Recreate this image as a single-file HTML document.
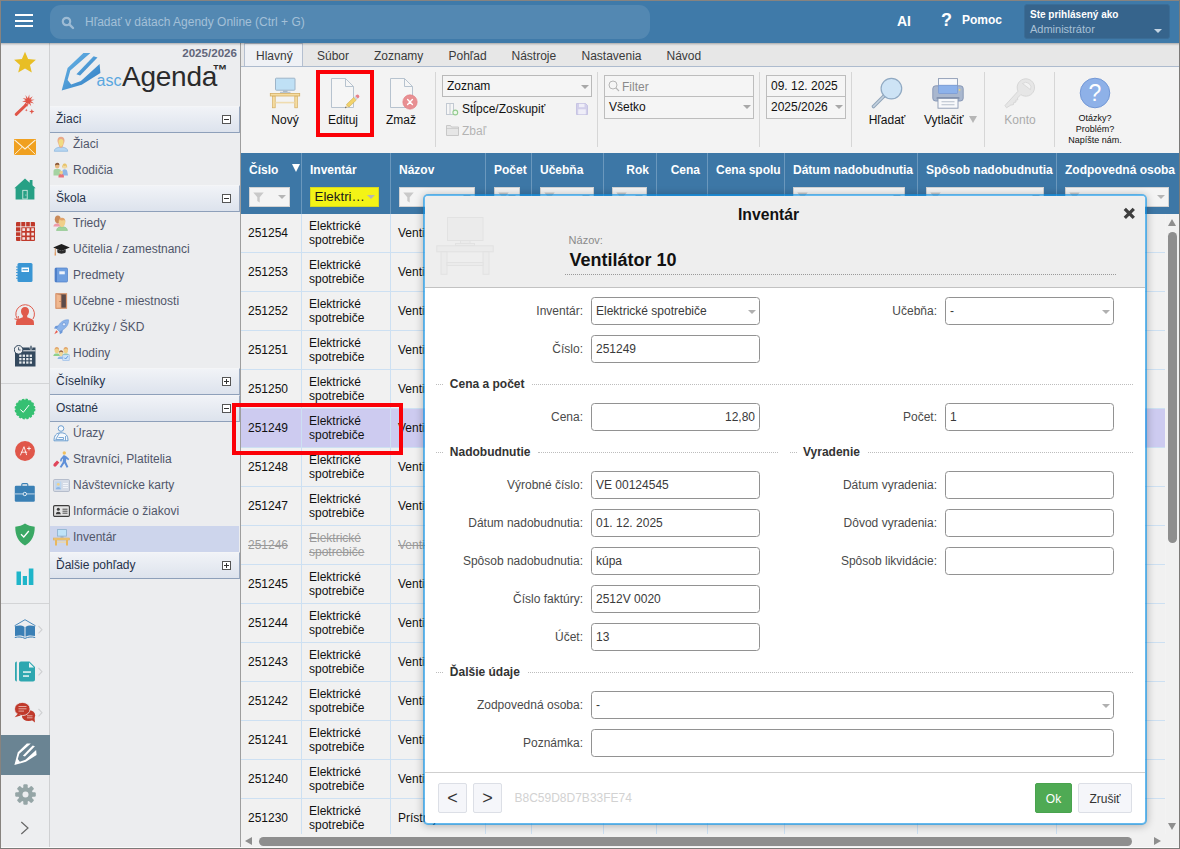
<!DOCTYPE html>
<html lang="sk">
<head>
<meta charset="utf-8">
<title>ascAgenda - Inventár</title>
<style>
*{box-sizing:border-box;margin:0;padding:0}
html,body{width:1180px;height:849px;overflow:hidden;background:#edeef0;font-family:"Liberation Sans",Arial,sans-serif;font-size:12px;color:#000}
.abs{position:absolute}
#app{position:absolute;left:0;top:0;width:1180px;height:849px;overflow:hidden}
#bl{position:absolute;left:0;top:0;width:1px;height:849px;background:#87837f;z-index:99}
#bt{position:absolute;left:0;top:0;width:1180px;height:1px;background:#87837f;z-index:99}
#br{position:absolute;left:1179px;top:0;width:1px;height:849px;background:#7c7a78;z-index:99}
#bb{position:absolute;left:0;top:848px;width:1180px;height:1px;background:#7c7a78;z-index:99}
/* top bar */
#topbar{position:absolute;left:0;top:0;width:1180px;height:43px;background:#3f7aa9;box-shadow:0 1px 2px rgba(0,0,0,.3);z-index:5}
#burger i{position:absolute;left:15px;width:18px;height:2px;background:#fff}
#search{position:absolute;left:50px;top:5px;width:600px;height:34px;border-radius:11px;background:#5388b2}
#search span{position:absolute;left:35px;top:10px;font-size:12px;line-height:14px;color:#a3c0d8;white-space:nowrap}
.tb{position:absolute;color:#fff;font-weight:bold;font-size:13px}
#user{position:absolute;left:1024px;top:4px;width:146px;height:35px;background:#36648c;border-radius:3px;border:1px solid #3a6d97}
/* icon bar */
#iconbar{position:absolute;left:0;top:42px;width:50px;height:807px;background:#edeef0;border-right:1px solid #cfd0d2}
/* sidebar */
#side{position:absolute;left:50px;top:42px;width:190px;height:807px;background:#ecedef}
.sh{position:absolute;left:0;width:190px;height:27px;background:linear-gradient(#f1f3f7,#dde3ed);border-bottom:1px solid #8ea0ba;border-right:1px solid #9aa9bf;border-top:1px solid #f4f5f7;font-size:12px;color:#26324a;padding:5px 0 0 6px}
.sh b{position:absolute;left:172px;top:8px;width:9px;height:9px;border:1px solid #555;background:#fff}
.sh b:before{content:"";position:absolute;left:1px;top:3px;width:5px;height:1px;background:#333}
.sh b.p:after{content:"";position:absolute;left:3px;top:1px;width:1px;height:5px;background:#333}
.si{position:absolute;left:0;width:189px;height:26px;font-size:12px;color:#50566a;padding:5px 0 0 23px;white-space:nowrap}
.si .ic{position:absolute;left:3px;top:4px;line-height:0}
/* main */
#main{position:absolute;left:0;top:0;width:1180px;height:849px}
#tabs{position:absolute;left:241px;top:43px;width:939px;height:24px;background:#e7e7e7;border-bottom:1px solid #adbbce}
.tt{position:absolute;top:49px;font-size:12px;line-height:14px;color:#3a3a3a;white-space:nowrap}
#tab1{position:absolute;left:244px;top:43px;width:59px;height:23px;background:#eff1f5;border:1px solid #b4bfd0;border-bottom:none}
.rl{position:absolute;font-size:12px;line-height:14px;color:#111;text-align:center;white-space:nowrap}
.vsep{position:absolute;top:72px;width:1px;height:75px;background:#d6d6d6}
.inp{position:absolute;background:#fff;border:1px solid #c6c6c6;font-size:12px;line-height:14px;padding:3px 0 0 4px;height:20px;color:#111;white-space:nowrap}
.dd{position:absolute;width:0;height:0;border-left:4px solid transparent;border-right:4px solid transparent;border-top:4px solid #a8a8a8}
/* grid */
#ghead{position:absolute;left:241px;top:153px;width:939px;height:61px;background:#3d77a6}
.hc{position:absolute;top:153px;height:61px;border-right:1px solid #6b98bd;color:#fff;font-weight:bold;font-size:12px;line-height:14px;padding:10px 0 0 8px;white-space:nowrap;overflow:hidden}
.fb{position:absolute;top:187px;height:20px;background:#f4f4f4;border:1px solid #d2d2d2}
#gbody{position:absolute;left:241px;top:214px;width:924px;height:620px;background:#f1f1f1;overflow:hidden}
.row{position:absolute;left:0;width:924px;height:39px;border-bottom:1px solid #cde0f2;font-size:12px;color:#111}
.row span{position:absolute;line-height:14px;white-space:nowrap}
.row .c1{left:7px;top:12px}
.row .c2{left:68px;top:5px}
.row .c3{left:157px;top:12px}
.row.del{color:#9a9a9a}
.row.del span{text-decoration:line-through}
.row.sel{background:#cdcbf0}
.gv{position:absolute;top:0;width:1px;height:620px;background:#cde0f2}
.red{position:absolute;border:4px solid #fb0007}
/* modal */
#modal{position:absolute;left:423px;top:194px;width:724px;height:631px;background:#fff;background-clip:padding-box;border:2px solid rgba(15,150,235,.62);border-radius:5px;box-shadow:0 1px 9px rgba(0,0,0,.27);overflow:hidden;z-index:4}
#mhead{position:absolute;left:0;top:0;width:720px;height:92px;background:#eeeeee;border-bottom:1px solid #c2c2c2}
.ml{position:absolute;font-size:12px;line-height:14px;color:#4a4a4a;text-align:right;white-space:nowrap}
.mi{position:absolute;height:28px;background:#fff;border:1px solid #929292;border-radius:3.500px;font-size:12px;line-height:14px;color:#3a3a3a;padding:6px 0 0 4px;white-space:nowrap}
.sec{position:absolute;font-size:12px;line-height:14px;font-weight:bold;color:#333;white-space:nowrap}
.dot{position:absolute;height:0;border-top:1px dotted #bdbdbd}
.btn{position:absolute;background:#f5f6fa;border:1px solid #dcdfe6;border-radius:2px;text-align:center;color:#333;line-height:14px}
</style>
</head>
<body>
<div id="app">
<div id="bl"></div><div id="bt"></div><div id="br"></div><div id="bb"></div>

<!-- TOPBAR -->
<div id="topbar">
  <div id="burger"><i style="top:14px"></i><i style="top:19.5px"></i><i style="top:25px"></i></div>
  <div id="search">
    <svg class="abs" style="left:11px;top:10.500px" width="14" height="14" viewBox="0 0 14 14"><circle cx="5.500" cy="5.500" r="3.700" fill="none" stroke="#9dbbd4" stroke-width="2.200"/><path d="M8.300 8.300L12 12" stroke="#9dbbd4" stroke-width="2.400" stroke-linecap="round"/></svg>
    <span>Hľadať v dátach Agendy Online (Ctrl + G)</span>
  </div>
  <div class="tb" style="left:897px;top:13px;font-size:14px;line-height:16px">AI</div>
  <div class="tb" style="left:941px;top:10px;font-size:18px;line-height:21px">?</div>
  <div class="tb" style="left:962px;top:13px;font-size:12px;line-height:14px">Pomoc</div>
  <div id="user">
    <div class="abs" style="left:5px;top:4px;font-size:10px;line-height:12px;font-weight:bold;color:#fff;white-space:nowrap">Ste prihlásený ako</div>
    <div class="abs" style="left:5px;top:18px;font-size:11px;line-height:13px;color:#a9c1d6;white-space:nowrap">Administrátor</div>
    <div class="dd" style="left:129px;top:24px;border-top-color:#c5d5e3"></div>
  </div>
</div>

<!-- ICONBAR -->
<div id="iconbar">
<!-- star -->
<svg class="abs" style="left:13px;top:9px" width="24" height="23" viewBox="0 0 24 23"><path d="M12 0.8l3.1 7.2 7.8.7-5.9 5.2 1.8 7.7-6.8-4.1-6.8 4.1 1.8-7.7-5.9-5.2 7.8-.7z" fill="#e8be25"/></svg>
<!-- wand -->
<svg class="abs" style="left:14px;top:52px" width="22" height="23" viewBox="0 0 22 23"><path d="M2.200 20.300L12 11" stroke="#e05548" stroke-width="3" stroke-linecap="round"/><path d="M15.24 0.47 L15.46 4.38 L18.72 2.21 L16.61 5.50 L20.52 5.67 L16.87 7.09 L19.93 9.52 L16.15 8.53 L17.20 12.29 L14.72 9.27 L13.36 12.93 L13.14 9.02 L9.88 11.19 L11.99 7.90 L8.08 7.73 L11.73 6.31 L8.67 3.88 L12.45 4.87 L11.40 1.11 L13.88 4.13Z" fill="#e05548"/><path d="M17.80 15.00L18.53 16.87L20.40 17.60L18.53 18.33L17.80 20.20L17.07 18.33L15.20 17.60L17.07 16.87ZM12.30 14.80L12.69 15.81L13.70 16.20L12.69 16.59L12.30 17.60L11.91 16.59L10.90 16.20L11.91 15.81Z" fill="#e05548"/></svg>
<!-- envelope -->
<svg class="abs" style="left:14px;top:97px" width="22" height="16" viewBox="0 0 22 16"><rect width="22" height="16" fill="#f0a020"/><path d="M0.500 0.800l10.500 9.200L21.500 0.800" fill="none" stroke="#fdf3de" stroke-width="1.100"/><path d="M0.500 15.500l7.600-7.300M21.500 15.500l-7.600-7.300" fill="none" stroke="#fdf3de" stroke-width="0.900"/></svg>
<!-- house -->
<svg class="abs" style="left:14px;top:136px" width="22" height="22" viewBox="0 0 22 22"><path d="M11 0.500L0.300 10.200h1.300V21.500h18.800V10.200h1.300L18.500 7.300V2h-2.800v2.800z" fill="#27a085"/><rect x="8.800" y="12.300" width="4.400" height="8.700" fill="#27a085" stroke="#dff0ea" stroke-width="0.800"/><circle cx="11.900" cy="17" r="0.500" fill="#dff0ea"/></svg>
<!-- grid -->
<svg class="abs" style="left:16px;top:180px" width="19" height="19" viewBox="0 0 19 19"><rect x="0" y="0" width="19" height="19" rx="1" fill="#c0392b"/><g fill="#f3e3e1"><rect x="6.300" y="6.200" width="2.800" height="2.800"/><rect x="10.800" y="6.200" width="2.800" height="2.800"/><rect x="15.300" y="6.200" width="2.600" height="2.800"/><rect x="6.300" y="10.700" width="2.800" height="2.800"/><rect x="10.800" y="10.700" width="2.800" height="2.800"/><rect x="15.300" y="10.700" width="2.600" height="2.800"/><rect x="6.300" y="15.200" width="2.800" height="2.600"/><rect x="10.800" y="15.200" width="2.800" height="2.600"/><rect x="15.300" y="15.200" width="2.600" height="2.600"/></g><g stroke="#edeef0" stroke-width="0.900"><path d="M4.800 0v19M9.700 0v5M14.300 0v5M0 4.800h19M0 9.800h5M0 14.400h5"/></g></svg>
<!-- notebook -->
<svg class="abs" style="left:16px;top:221px" width="17" height="19" viewBox="0 0 17 19"><rect x="1.500" y="0" width="15" height="19" rx="1.500" fill="#3a96d4"/><rect x="5.500" y="4.500" width="7.500" height="4.500" fill="#fff"/><rect x="6.500" y="6.200" width="5.500" height="1.100" fill="#3a96d4"/><g stroke="#3a96d4" stroke-width="1"><path d="M0 4h2M0 6.800h2M0 9.600h2M0 12.400h2M0 15.200h2"/></g></svg>
<!-- person refresh -->
<svg class="abs" style="left:14px;top:261px" width="22" height="23" viewBox="0 0 22 23"><path d="M3 15.500A9.300 9.300 0 1 1 19 16" fill="none" stroke="#e05a4b" stroke-width="1"/><path d="M0.500 15.800l3.600 1 .2-3.800" fill="none" stroke="#e05a4b" stroke-width="1"/><path d="M11 4c2.600 0 4 1.900 4 4.300 0 1.900-.8 3.500-1.800 4.300v1.600c2.600.9 5.500 1.700 6.300 3.300.4.900.5 2 .5 4.500H2c0-2.500.1-3.600.5-4.500.8-1.600 3.700-2.400 6.300-3.300v-1.600C7.800 11.800 7 10.200 7 8.300 7 5.900 8.400 4 11 4z" fill="#e05a4b"/></svg>
<!-- calendar clock -->
<svg class="abs" style="left:14px;top:303px" width="22" height="22" viewBox="0 0 22 22"><rect x="1" y="2.500" width="20.500" height="19" fill="#34495e"/><rect x="9" y="5.300" width="12.500" height="1" fill="#edeef0"/><rect x="16" y="0.500" width="2" height="4" rx="1" fill="#34495e" stroke="#edeef0" stroke-width="0.600"/><g fill="#e6e9ec"><rect x="5.200" y="9.600" width="2.300" height="2.300"/><rect x="8.700" y="9.600" width="2.300" height="2.300"/><rect x="12.200" y="9.600" width="2.300" height="2.300"/><rect x="15.700" y="9.600" width="2.300" height="2.300"/><rect x="5.200" y="13" width="2.300" height="2.300"/><rect x="8.700" y="13" width="2.300" height="2.300"/><rect x="12.200" y="13" width="2.300" height="2.300"/><rect x="15.700" y="13" width="2.300" height="2.300"/><rect x="5.200" y="16.400" width="2.300" height="2.300"/><rect x="8.700" y="16.400" width="2.300" height="2.300"/><rect x="12.200" y="16.400" width="2.300" height="2.300"/><rect x="15.700" y="16.400" width="2.300" height="2.300"/></g><circle cx="4.600" cy="4.800" r="4.300" fill="#edeef0" stroke="#34495e" stroke-width="1"/><path d="M4.600 2.300v2.700h2" fill="none" stroke="#34495e" stroke-width="0.900"/></svg>
<div class="abs" style="left:1px;top:341px;width:48px;height:1px;background:#d3d4d6"></div>
<!-- check badge -->
<svg class="abs" style="left:14px;top:356px" width="22" height="22" viewBox="0 0 22 22"><circle cx="11" cy="11" r="9.600" fill="#36c072" stroke="#36c072" stroke-width="1.600" stroke-dasharray="2.300 1.500"/><path d="M6.300 11.500l3 2.800 5.800-7.300" fill="none" stroke="#fff" stroke-width="1"/></svg>
<!-- A+ -->
<svg class="abs" style="left:14px;top:398px" width="22" height="22" viewBox="0 0 22 22"><circle cx="11" cy="11" r="10" fill="#e0574a"/><path d="M6.500 15l3.500-8.300 2.500 8M7.300 12.200h5.500M13.500 8.500h3M15 7v3" fill="none" stroke="#fff" stroke-width="0.850" stroke-linecap="round"/></svg>
<!-- briefcase -->
<svg class="abs" style="left:14px;top:441px" width="22" height="20" viewBox="0 0 22 20"><rect x="7.800" y="0.600" width="6" height="3.500" rx="1" fill="none" stroke="#3a80b5" stroke-width="1.100"/><rect x="0.800" y="2.800" width="20" height="16" rx="1.200" fill="#3a80b5"/><rect x="0.800" y="10.300" width="20" height="1.200" fill="#a9c6de"/><circle cx="10.800" cy="11" r="1.700" fill="#3a80b5" stroke="#dfeaf3" stroke-width="1"/></svg>
<!-- shield -->
<svg class="abs" style="left:14px;top:481px" width="22" height="23" viewBox="0 0 22 23"><path d="M11 0.600c2.800 2 6 3 9.700 3.100.2 8.800-3 15-9.700 18.700C4.300 18.700 1.100 12.500 1.300 3.700 5 3.600 8.200 2.600 11 0.600z" fill="#3aa864"/><path d="M7 11.300l2.800 2.700 5-6" fill="none" stroke="#fff" stroke-width="1.300"/></svg>
<!-- chart -->
<svg class="abs" style="left:16px;top:526px" width="18" height="18" viewBox="0 0 18 18"><rect x="0.500" y="3.500" width="4.500" height="13.500" fill="#1fb5c9"/><rect x="6.800" y="8" width="4.200" height="9" fill="#1fb5c9"/><rect x="12.800" y="0.500" width="4.600" height="16.500" fill="#1fb5c9"/></svg>
<div class="abs" style="left:1px;top:561px;width:48px;height:1px;background:#d3d4d6"></div>
<!-- book -->
<svg class="abs" style="left:14px;top:577px" width="30" height="21" viewBox="0 0 30 21"><path d="M0.600 6.800L11 0.700l10.500 6.100" fill="none" stroke="#3a7fb5" stroke-width="0.900"/><path d="M1 7.200c3.500-1.200 7-1 9.500.7v9.800c-2.500-1.500-6-1.700-9.500-.6zM21 7.200c-3.500-1.200-7-1-9.500.7v9.800c2.500-1.500 6-1.700 9.500-.6z" fill="#3a7fb5"/><path d="M0.800 18.500c3.500-.9 7-.7 10.200.9 3.200-1.600 6.700-1.800 10.200-.9" fill="none" stroke="#3a7fb5" stroke-width="1"/><path d="M24.500 7l3.500 3.700-3.500 3.700" fill="none" stroke="#cfd0d2" stroke-width="1.100"/></svg>
<!-- doc -->
<svg class="abs" style="left:14px;top:619px" width="30" height="21" viewBox="0 0 30 21"><path d="M1 2.500c0-1 .5-1.800 1.800-2v20C1.500 20.300 1 19.500 1 18.500z" fill="#2ea7b0"/><path d="M7 0.500h8.500l5.500 5.500v12.500c0 1.200-.8 2-2 2H7c-1.200 0-2-.8-2-2v-16c0-1.200.8-2 2-2z" fill="#2ea7b0"/><path d="M15 1.500v5h5z" fill="#eaf5f6"/><rect x="9" y="10.300" width="8" height="1.500" fill="#eaf5f6"/><rect x="9" y="14.300" width="6" height="1.500" fill="#eaf5f6"/><path d="M24.500 7l3.500 3.700-3.500 3.700" fill="none" stroke="#cfd0d2" stroke-width="1.100"/></svg>
<!-- chat -->
<svg class="abs" style="left:14px;top:660px" width="30" height="21" viewBox="0 0 30 21"><ellipse cx="14.500" cy="13.500" rx="6.700" ry="5.500" fill="#c0392b"/><path d="M17 17.500l4 3-0.500-4.500z" fill="#c0392b"/><ellipse cx="8.300" cy="7" rx="7.800" ry="6.600" fill="#c0392b" stroke="#edeef0" stroke-width="0.800"/><path d="M4 11.500l-3.300 3.800 6-1.800z" fill="#c0392b"/><g stroke="#e9b5af" stroke-width="0.900"><path d="M4.500 4.500h8M4.500 6.800h8M4.500 9.100h5.500M13 13.800h5.500M13 15.800h5.500"/></g><path d="M24.500 7l3.500 3.700-3.500 3.700" fill="none" stroke="#cfd0d2" stroke-width="1.100"/></svg>
<!-- active pencil -->
<div class="abs" style="left:1px;top:693px;width:49px;height:40px;background:#6a8493"></div>
<svg class="abs" style="left:13.500px;top:701px" width="23.500" height="23" viewBox="0 0 41 40"><path d="M22.400 1H29.400L9.300 18.500 6.600 28 10.200 32.600 19.900 29 38.600 12 39.400 21 20.700 32.800 0.700 38.500 6.600 16Z" fill="#fff"/><path d="M32.600 4.300L36.500 5.500 19.100 23.400 15.400 22.200Z" fill="#fff"/></svg>
<!-- gear -->
<svg class="abs" style="left:15px;top:742px" width="21" height="21" viewBox="0 0 21 21"><g transform="translate(10.500 10.500)"><g fill="#95a5a6"><rect x="-2.200" y="-10.300" width="4.400" height="20.600" rx="1.200"/><rect x="-2.200" y="-10.300" width="4.400" height="20.600" rx="1.200" transform="rotate(45)"/><rect x="-2.200" y="-10.300" width="4.400" height="20.600" rx="1.200" transform="rotate(90)"/><rect x="-2.200" y="-10.300" width="4.400" height="20.600" rx="1.200" transform="rotate(135)"/><circle r="7.300"/></g><circle r="3" fill="#edeef0"/></g></svg>
<!-- chevron -->
<svg class="abs" style="left:20px;top:779px" width="10" height="14" viewBox="0 0 10 14"><path d="M1.300 1l6.700 6-6.700 6" fill="none" stroke="#666" stroke-width="1.200"/></svg>

</div>

<!-- SIDEBAR -->
<div id="side">
<!--SIDE-->
<div class="abs" style="right:3px;top:5px;font-size:11.6px;line-height:1;font-weight:bold;color:#62667a">2025/2026</div>
<svg class="abs" style="left:11px;top:10px" width="41" height="40" viewBox="0 0 41 40"><defs><linearGradient id="lg" x1="0" y1="0" x2="1" y2="1"><stop offset="0" stop-color="#6bb7e8"/><stop offset="1" stop-color="#2f7cc2"/></linearGradient></defs><path d="M22.400 1H29.400L9.300 18.500 6.600 28 10.200 32.600 19.900 29 38.600 12 39.400 21 20.700 32.800 0.700 38.500 6.600 16Z" fill="url(#lg)"/><path d="M32.600 4.300L36.500 5.500 19.100 23.400 15.400 22.200Z" fill="url(#lg)"/></svg>
<div class="abs" style="left:46.500px;top:30.800px;font-size:16px;line-height:1;color:#5aa7df">asc</div>
<div class="abs" style="left:72px;top:20.600px;font-size:28px;line-height:1;color:#2b2b2b;letter-spacing:-0.250px">Agenda</div>
<div class="abs" style="left:162.500px;top:20px;font-size:15px;line-height:1;font-weight:bold;color:#2b2b2b">™</div>
<div class="sh" style="top:64px">Žiaci<b></b></div>
<div class="si" style="top:90px"><span class="ic" style="top:4px"><svg width="16" height="16" viewBox="0 0 16 16"><path d="M1.300 15.300c0-2.600 2-3.500 4.700-4h4c2.700.5 4.700 1.400 4.700 4z" fill="#b5d6f2" stroke="#8ab6de" stroke-width="0.700"/><path d="M8 0.800c2.300 0 3.500 1.600 3.500 4 0 1-.3 1.900-.8 2.600L9.800 10.500c-.4.900-1 1.300-1.800 1.300s-1.400-.4-1.800-1.300L5.300 7.400c-.5-.7-.8-1.600-.8-2.600 0-2.400 1.200-4 3.500-4z" fill="#e9a98a"/><path d="M8 3c1.500 0 2.500.9 2.500 2.700 0 1.300-.4 2.500-.9 3.600-.4.900-.9 1.400-1.600 1.400s-1.200-.5-1.600-1.400c-.5-1.100-.9-2.300-.9-3.600C5.500 3.900 6.500 3 8 3z" fill="#f0dc82"/></svg></span>Žiaci</div>
<div class="si" style="top:116px"><span class="ic" style="top:4px"><svg width="17" height="16" viewBox="0 0 17 16"><path d="M0.500 13.500V9c0-1.200 1-2 2.200-2h3c1.200 0 2.200.8 2.200 2v4.500z" fill="#a5d3a2"/><ellipse cx="4.200" cy="3.800" rx="2.200" ry="2.700" fill="#e6b77e"/><path d="M2 3.500C2 1.500 3 .7 4.300.7S6.500 1.500 6.400 3.200C5.500 2.600 3.500 2.300 2 3.500z" fill="#8b5a3c"/><path d="M9 13.500l.3-4c.2-1.500 1-2.300 2.300-2.300s2.500.8 2.700 2.300l.7 4z" fill="#8fb6e6"/><ellipse cx="11.700" cy="4.200" rx="2" ry="2.500" fill="#f0d9a0"/><path d="M9.300 6.500c-.3-3 .5-5 2.400-5s2.800 2 2.400 5c-.5-.8-.8-2-1-3-.8.500-2 .5-2.800 0-.2 1-.5 2.200-1 3z" fill="#e8c36a"/><path d="M5.500 15.500v-1.700c0-.9.800-1.500 1.700-1.500h2c.9 0 1.700.6 1.700 1.500v1.700z" fill="#e8727a"/><circle cx="8.200" cy="10.500" r="1.700" fill="#f0d08a"/></svg></span>Rodičia</div>
<div class="sh" style="top:143px">Škola<b></b></div>
<div class="si" style="top:169px"><span class="ic" style="top:4px"><svg width="17" height="16" viewBox="0 0 17 16"><path d="M0.300 11.500c.3-2 1.800-2.700 3.500-3h2c1.700.3 3.200 1 3.500 3z" fill="#ef9aa8"/><path d="M4.800 0.500c1.800 0 3 1.500 3 3.800S6.500 8.500 4.800 8.500 1.800 6.600 1.800 4.300 3 .5 4.800 .5z" fill="#c98a5a"/><path d="M3.500 15.500c.3-2.500 2-3.300 4-3.700h3c2 .4 3.700 1.200 4 3.700z" fill="#9fd39c" stroke="#7cbf7a" stroke-width="0.500"/><path d="M9 3c2 0 3.300 1.600 3.300 4S10.800 12 9 12 5.700 9.400 5.700 7 7 3 9 3z" fill="#f0d08a"/><path d="M5.600 7C5.500 4.300 7 2.800 9 2.800s3.500 1.500 3.400 4.200c-.4-1.200-.8-1.800-1.200-2-1.300.5-3.100.5-4.400 0-.4.200-.8.800-1.200 2z" fill="#e2a46a"/></svg></span>Triedy</div>
<div class="si" style="top:195px"><span class="ic" style="top:4px"><svg width="17" height="16" viewBox="0 0 17 16"><path d="M8.500 3L16.800 6.500 8.500 10 .2 6.500z" fill="#1e1e1e"/><path d="M4.300 8.300v3c1 1 2.500 1.400 4.200 1.400s3.200-.4 4.200-1.400v-3L8.500 10z" fill="#2b2b2b"/><path d="M2.300 7.300v5" stroke="#c9824a" stroke-width="0.800"/><path d="M1.800 11.500h1l.3 3h-1.600z" fill="#e0965a"/></svg></span>Učitelia / zamestnanci</div>
<div class="si" style="top:221px"><span class="ic" style="top:4px"><svg width="16" height="16" viewBox="0 0 16 16"><rect x="2" y="1" width="12.500" height="14" rx="1" fill="#6f9fe0" stroke="#4f7fc8" stroke-width="0.700"/><rect x="2" y="1" width="2" height="14" fill="#4f7fc8"/><rect x="6.300" y="4.300" width="5.500" height="3" fill="#eef3fb"/></svg></span>Predmety</div>
<div class="si" style="top:247px"><span class="ic" style="top:4px"><svg width="16" height="16" viewBox="0 0 16 16"><rect x="3" y="0.800" width="10.500" height="14.400" fill="#5b4a4a" stroke="#d8936a" stroke-width="1.200"/><path d="M3 0.800l5 1.200v13l-5 .2z" fill="#f0b890" stroke="#d8936a" stroke-width="0.800"/><circle cx="7" cy="8.500" r="0.600" fill="#a0643c"/></svg></span>Učebne - miestnosti</div>
<div class="si" style="top:273px"><span class="ic" style="top:4px"><svg width="17" height="16" viewBox="0 0 17 16"><path d="M15.500 0.800c-4-.3-7.500 1.500-10 5.700l-2 3 3.300 3.300 3-2c4.200-2.500 6-6 5.700-10z" fill="#8db4ea" stroke="#6c98d8" stroke-width="0.600"/><circle cx="11" cy="5.300" r="1.600" fill="#dfeafa" stroke="#5f8ccf" stroke-width="0.600"/><path d="M5.500 6.500L2.500 7 1 9.500l2.700.2zM9.800 10.800l-.5 3-2.500 1.500-.2-2.700z" fill="#6c98d8"/><path d="M3.300 11.300l1.700 1.700-3.700 2.200z" fill="#e85a4a"/></svg></span>Krúžky / ŠKD</div>
<div class="si" style="top:299px"><span class="ic" style="top:4px"><svg width="17" height="16" viewBox="0 0 17 16"><path d="M0.300 11c.2-1.700 1.200-2.300 2.500-2.500h2c1.300.2 2.300.8 2.500 2.500z" fill="#8fd08c"/><ellipse cx="3.800" cy="5.500" rx="2.200" ry="2.800" fill="#f0d08a"/><path d="M1.500 5c0-2 1-3 2.300-3S6.200 3 6.100 5C5.500 4 4.800 3.700 3.800 3.700S2.100 4 1.500 5z" fill="#e2a46a"/><path d="M9.300 11c.2-1.700 1.200-2.300 2.500-2.500h2c1.300.2 2.300.8 2.500 2.500z" fill="#8fd08c"/><ellipse cx="12.800" cy="5.500" rx="2.200" ry="2.800" fill="#f0d08a"/><path d="M10.500 5c0-2 1-3 2.300-3s2.400 1 2.300 3c-.6-1-1.300-1.300-2.300-1.300S11.100 4 10.500 5z" fill="#e2a46a"/><path d="M4.500 14c.2-1.700 1.300-2.400 2.600-2.600h2c1.300.2 2.400.9 2.600 2.600z" fill="#8fb6e6"/><ellipse cx="8.100" cy="8.600" rx="2.100" ry="2.600" fill="#f2d898"/><path d="M5.900 8c0-1.800.9-2.700 2.200-2.700s2.300.9 2.200 2.700c-.6-.9-1.200-1.100-2.200-1.100S6.500 7.100 5.900 8z" fill="#9a6a4a"/><rect x="9.800" y="9.800" width="6.400" height="5.700" fill="#cfe3f8" stroke="#8fb6e6" stroke-width="0.600"/><path d="M11.300 12.700l1.300 1.300 2.300-2.800" fill="none" stroke="#4f8fd8" stroke-width="0.900"/></svg></span>Hodiny</div>
<div class="sh" style="top:326px">Číselníky<b class="p"></b></div>
<div class="sh" style="top:353px">Ostatné<b></b></div>
<div class="si" style="top:379px"><span class="ic" style="top:4px"><svg width="16" height="17" viewBox="0 0 16 17"><circle cx="8" cy="3.500" r="2.800" fill="#f4f8fc" stroke="#5f95cc" stroke-width="0.900"/><path d="M1 15.800c0-5 2-8 7-8s7 3 7 8z" fill="#f4f8fc" stroke="#5f95cc" stroke-width="0.900"/><path d="M6.500 8l-3.800 6.500h7.800v-2H5.500" fill="none" stroke="#5f95cc" stroke-width="0.800"/><path d="M12.500 11v4.500" stroke="#5f95cc" stroke-width="0.800"/></svg></span>Úrazy</div>
<div class="si" style="top:405px"><span class="ic" style="top:4px"><svg width="17" height="17" viewBox="0 0 17 17"><circle cx="11.300" cy="2" r="1.700" fill="#f0c060"/><path d="M10.800 4l-3.300 3.800-.5 2.500 1.500.3.500-2 1-1-.3 3.500-3 4.800 1.700.8 3-4.500 2.200 4.500 1.800-.7-2.400-5.300.3-3 2 1.500 1-1.200-3.300-3z" fill="#5f8fd8"/><path d="M1 12.500l3-3 2.300 2-3 3.500c-.7.800-1.700.8-2.400.2s-.7-1.900.1-2.700z" fill="#e0455a"/></svg></span>Stravníci, Platitelia</div>
<div class="si" style="top:431px"><span class="ic" style="top:6px"><svg width="17" height="13" viewBox="0 0 17 13"><rect x="0.500" y="0.500" width="16" height="12" rx="1.200" fill="#d5dbe6" stroke="#aab3c4" stroke-width="0.800"/><rect x="2.300" y="2.500" width="6" height="8" fill="#bcd6f0"/><circle cx="5.300" cy="5.300" r="1.400" fill="#f0d08a"/><path d="M2.800 10.300c.2-1.600 1.200-2.300 2.500-2.300s2.300.7 2.500 2.300z" fill="#8fb6e6"/><path d="M10 4.500h5M10 6.500h5M10 8.500h5" stroke="#f4f6fa" stroke-width="0.900"/></svg></span>Návštevnícke karty</div>
<div class="si" style="top:457px"><span class="ic" style="top:6px"><svg width="17" height="12" viewBox="0 0 17 12"><rect x="0.600" y="0.600" width="15.800" height="10.800" rx="1.200" fill="#e4e4e4" stroke="#3c3c3c" stroke-width="1.100"/><circle cx="5.300" cy="4.300" r="1.500" fill="#3c3c3c"/><path d="M2.800 9.300c.2-1.700 1.200-2.500 2.500-2.500s2.300.8 2.500 2.500z" fill="#3c3c3c"/><path d="M9.500 4.200h5M9.500 6.200h5M9.500 8.200h5" stroke="#3c3c3c" stroke-width="0.900"/></svg></span>Informácie o žiakovi</div>
<div class="si" style="top:484px;padding-top:4px;background:#cdd5ec"><span class="ic" style="top:3px"><svg width="17" height="17" viewBox="0 0 17 17"><rect x="4.500" y="0.600" width="9" height="6.500" fill="#bfe3f8" stroke="#8ab0cc" stroke-width="0.800"/><rect x="7.500" y="7.300" width="3" height="1.300" fill="#9ab0c0"/><rect x="0.500" y="9" width="16" height="2" fill="#f0c878" stroke="#d8a850" stroke-width="0.500"/><rect x="2" y="11" width="2" height="5.500" fill="#e8b860"/><rect x="13" y="11" width="2" height="5.500" fill="#e8b860"/><rect x="4" y="12.500" width="9" height="1.200" fill="#f0d8a0"/></svg></span>Inventár</div>
<div class="sh" style="top:510px">Ďalšie pohľady<b class="p"></b></div>
<!--/SIDE-->
</div>

<!-- MAIN -->
<div id="main">
<!--MAIN-->
<div class="abs" style="left:240px;top:43px;width:940px;height:806px;background:#f3f3f3"></div>
<div class="abs" style="left:240px;top:43px;width:1px;height:806px;background:#9e9e9e"></div>
<div id="tabs"></div>
<div id="tab1"></div>
<span class="tt" style="left:256px">Hlavný</span>
<span class="tt" style="left:317px">Súbor</span>
<span class="tt" style="left:374px">Zoznamy</span>
<span class="tt" style="left:448.5px">Pohľad</span>
<span class="tt" style="left:511.5px">Nástroje</span>
<span class="tt" style="left:581.5px">Nastavenia</span>
<span class="tt" style="left:666.5px">Návod</span>
<div class="vsep" style="left:435px"></div>
<div class="vsep" style="left:597px"></div>
<div class="vsep" style="left:759px"></div>
<div class="vsep" style="left:851px"></div>
<div class="vsep" style="left:984px"></div>
<div class="vsep" style="left:1054px"></div>
<svg class="abs" style="left:269px;top:77px" width="32" height="32" viewBox="0 0 32 32"><rect x="6.500" y="1.200" width="19.500" height="12" rx="0.800" fill="#bfe0f5" stroke="#9db4c8" stroke-width="1"/><rect x="14" y="13.500" width="4.500" height="1.500" fill="#a8b8c8"/><rect x="11" y="14.800" width="10.500" height="1.200" fill="#b8c4d0"/><rect x="1.300" y="16.500" width="29.400" height="2.500" fill="#f5dca0" stroke="#d4ad62" stroke-width="0.800"/><rect x="3.600" y="19.200" width="2.600" height="11.600" fill="#f5dca0" stroke="#d4ad62" stroke-width="0.700"/><rect x="25.800" y="19.200" width="2.600" height="11.600" fill="#f5dca0" stroke="#d4ad62" stroke-width="0.700"/><rect x="6.500" y="24.800" width="19" height="1.600" fill="#efdcb0"/></svg>
<div class="rl" style="left:255px;top:113px;width:60px">Nový</div>
<svg class="abs" style="left:331px;top:78px" width="30" height="32" viewBox="0 0 30 32"><path d="M0.500 0.500H14.500L22.500 8.500V29.500H0.500Z" fill="#f6f6f6" stroke="#b7c3cf" stroke-width="1"/><path d="M14.500 0.500V8.500H22.500" fill="none" stroke="#b7c3cf" stroke-width="1"/><g transform="translate(14 30.300) rotate(-43.500)"><path d="M0 0L3.800 -1.800V1.800Z" fill="#f0d9a8"/><path d="M0 0L1.600 -0.800V0.800Z" fill="#555"/><rect x="3.800" y="-1.800" width="10.200" height="3.600" fill="#f2d36b" stroke="#c9a94a" stroke-width="0.500"/><rect x="14" y="-1.800" width="2" height="3.600" fill="#cfd6de"/><path d="M16 -1.800h1.300a1.800 1.800 0 0 1 0 3.600h-1.300z" fill="#e8808a"/></g></svg>
<div class="rl" style="left:313px;top:113px;width:60px">Edituj</div>
<div class="red" style="left:316px;top:70px;width:58px;height:67px"></div>
<svg class="abs" style="left:390px;top:78px" width="30" height="32" viewBox="0 0 30 32"><path d="M0.500 0.500H14.500L22.500 8.500V29.500H0.500Z" fill="#f6f6f6" stroke="#b7c3cf" stroke-width="1"/><path d="M14.500 0.500V8.500H22.500" fill="none" stroke="#b7c3cf" stroke-width="1"/><circle cx="20" cy="24" r="7.200" fill="#e88f92" stroke="#e07a80" stroke-width="0.600"/><path d="M17.600 21.600l4.800 4.800M22.400 21.600l-4.800 4.800" stroke="#fff" stroke-width="1.400" stroke-linecap="round"/></svg>
<div class="rl" style="left:371px;top:113px;width:60px">Zmaž</div>
<div class="inp" style="left:442px;top:75px;width:150px;height:22px;background:#f5f5f5;border-color:#b9b9b9">Zoznam</div><div class="dd" style="left:581px;top:85px"></div>
<svg class="abs" style="left:446px;top:103px" width="13" height="13" viewBox="0 0 13 13"><rect x="0.500" y="0.500" width="7" height="11" fill="#f6f6f6" stroke="#c2c9d2" stroke-width="1"/><path d="M4 0.500v11" stroke="#c2c9d2" stroke-width="1"/><circle cx="9.300" cy="9.500" r="2.400" fill="#eef8ec" stroke="#93cc8f" stroke-width="1.100"/></svg>
<div class="abs" style="left:462px;top:102px;font-size:12px;color:#111;white-space:nowrap">Stĺpce/Zoskupiť</div>
<svg class="abs" style="left:576px;top:103px" width="12" height="12" viewBox="0 0 12 12"><path d="M0.500 0.500H9.500L11.500 2.500V11.500H0.500Z" fill="#d2cfea" stroke="#c0bce0" stroke-width="0.800"/><rect x="3" y="0.800" width="5.500" height="3.400" fill="#efeef8"/><rect x="2.200" y="6.300" width="7.600" height="5" fill="#efeef8"/></svg>
<svg class="abs" style="left:446px;top:125px" width="13" height="11" viewBox="0 0 13 11"><path d="M0.500 10.500V0.500H4.500L5.500 2H12.500V10.500Z" fill="#e6e6e6" stroke="#c4c4c4" stroke-width="0.900"/><path d="M0.500 3.500H12.500" stroke="#c4c4c4" stroke-width="0.700"/></svg>
<div class="abs" style="left:462px;top:124px;font-size:12px;color:#b3b3b3;white-space:nowrap">Zbaľ</div>
<div class="inp" style="left:604px;top:75px;width:150px;height:22px;background:#f5f5f5;border-color:#bdbdbd;color:#8a8a8a;padding-left:17px;padding-top:4px">Filter</div>
<svg class="abs" style="left:608px;top:80px" width="12" height="12" viewBox="0 0 12 12"><circle cx="5" cy="5" r="4" fill="none" stroke="#b5b5b5" stroke-width="1"/><path d="M8 8l3 3" stroke="#b5b5b5" stroke-width="1.100"/></svg>
<div class="inp" style="left:604px;top:96px;width:150px;height:23px;background:#f5f5f5;border-color:#bdbdbd;padding-top:3px;padding-left:4px">Všetko</div><div class="dd" style="left:743px;top:105px"></div>
<div class="inp" style="left:766px;top:75px;width:80px;height:22px;background:#f5f5f5;border-color:#bdbdbd;padding-left:4px">09. 12. 2025</div>
<div class="inp" style="left:766px;top:96px;width:80px;height:23px;background:#f5f5f5;border-color:#bdbdbd;padding-top:3px;padding-left:4px">2025/2026</div><div class="dd" style="left:835px;top:105px"></div>
<svg class="abs" style="left:870px;top:76px" width="34" height="34" viewBox="0 0 34 34"><path d="M3.500 30.500L14 20" stroke="#8fa3b8" stroke-width="3.600" stroke-linecap="round"/><path d="M3.500 30.500L14 20" stroke="#c5d3e0" stroke-width="1.600" stroke-linecap="round"/><circle cx="21.400" cy="12.600" r="10.300" fill="#cde3f5" stroke="#90a9c2" stroke-width="1.200"/></svg>
<div class="rl" style="left:857px;top:113px;width:60px">Hľadať</div>
<svg class="abs" style="left:932px;top:78px" width="32" height="31" viewBox="0 0 32 31"><rect x="6.500" y="0.600" width="19" height="9" fill="#f8f9fb" stroke="#8c9ab3" stroke-width="0.900"/><rect x="0.800" y="7.800" width="30.400" height="15.200" rx="2.800" fill="#a9b7ce" stroke="#8293b2" stroke-width="0.900"/><rect x="6.500" y="7.300" width="19" height="8.200" rx="0.800" fill="#8db2ea" stroke="#7698d2" stroke-width="0.700"/><circle cx="27.600" cy="11.800" r="0.900" fill="#f3da6a"/><rect x="4.500" y="19" width="23" height="2.200" rx="1" fill="#8191ae"/><rect x="6" y="20.500" width="20" height="9.700" fill="#f8f9fb" stroke="#8c9ab3" stroke-width="0.900"/><path d="M9.500 23.800h13M9.500 26.800h13" stroke="#b5bfcc" stroke-width="1.100"/></svg>
<div class="abs" style="left:924px;top:113px;font-size:12px;color:#111;white-space:nowrap">Vytlačiť</div>
<div class="abs" style="left:968.500px;top:116px;width:0;height:0;border-left:4.300px solid transparent;border-right:4.300px solid transparent;border-top:7.500px solid #b6b6b6"></div>
<svg class="abs" style="left:1004px;top:78px" width="32" height="31" viewBox="0 0 32 31"><path d="M21.800 0.800a8.700 8.700 0 1 1-5 15.800L13.500 20l.3 1.800-2 .3.200 2-2.200.3-.3 2.200-2.700.5L2.500 29.800 1 27.500 14 13.200A8.700 8.700 0 0 1 21.800 0.800z" fill="#e6e6e6" stroke="#d4d4d4" stroke-width="0.900"/><path d="M18.500 5.500a5.200 5.200 0 0 1 8 6.200z" fill="#f3f3f3" stroke="#d4d4d4" stroke-width="0.800"/></svg>
<div class="rl" style="left:990px;top:113px;width:60px;color:#ababab">Konto</div>
<svg class="abs" style="left:1079px;top:77px" width="32" height="32" viewBox="0 0 32 32"><circle cx="16" cy="16" r="14.800" fill="#8eb1e8" stroke="#7398d6" stroke-width="1"/><text x="16" y="24.300" text-anchor="middle" font-family="Liberation Sans, Arial, sans-serif" font-size="23" fill="#fff">?</text></svg>
<div class="abs" style="left:1045px;top:112.500px;width:100px;text-align:center;font-size:9px;line-height:11.200px;color:#111">Otázky?<br>Problém?<br>Napíšte nám.</div>
<div id="ghead"></div>
<div class="hc" style="left:241px;width:61px">Číslo</div>
<div class="hc" style="left:302px;width:89px">Inventár</div>
<div class="hc" style="left:391px;width:95px">Názov</div>
<div class="hc" style="left:486px;width:46px">Počet</div>
<div class="hc" style="left:532px;width:72px">Učebňa</div>
<div class="hc" style="left:604px;width:53px;text-align:right;padding-right:7px;padding-left:0">Rok</div>
<div class="hc" style="left:657px;width:51px;text-align:right;padding-right:7px;padding-left:0">Cena</div>
<div class="hc" style="left:708px;width:77px">Cena spolu</div>
<div class="hc" style="left:785px;width:133px">Dátum nadobudnutia</div>
<div class="hc" style="left:918px;width:139px">Spôsob nadobudnutia</div>
<div class="hc" style="left:1057px;width:124px">Zodpovedná osoba</div>
<div class="abs" style="left:291.500px;top:164px;width:0;height:0;border-left:4px solid transparent;border-right:4px solid transparent;border-top:8px solid #fff"></div>
<div class="fb" style="left:249px;width:41px"></div>
<svg class="abs" style="left:253px;top:192px" width="11" height="11" viewBox="0 0 11 11"><path d="M0.300 0.500H10.700L6.700 5.200V10.500L4.300 9V5.200Z" fill="#c9c9c9"/></svg>
<div class="dd" style="left:278px;top:195px;border-top-color:#b5b5b5"></div>
<div class="fb" style="left:310px;width:69px;background:#f3f316;border-color:#d8d820;font-size:13.330px;line-height:15px;padding:1px 0 0 3.500px;color:#1a1a1a;white-space:nowrap">Elektri…</div>
<div class="dd" style="left:367px;top:195px;border-top-color:#b5b5b5"></div>
<div class="fb" style="left:399px;width:76px"></div>
<svg class="abs" style="left:403px;top:192px" width="11" height="11" viewBox="0 0 11 11"><path d="M0.300 0.500H10.700L6.700 5.200V10.500L4.300 9V5.200Z" fill="#c9c9c9"/></svg>
<div class="dd" style="left:463px;top:195px;border-top-color:#b5b5b5"></div>
<div class="fb" style="left:494px;width:26px"></div>
<svg class="abs" style="left:498px;top:192px" width="11" height="11" viewBox="0 0 11 11"><path d="M0.300 0.500H10.700L6.700 5.200V10.500L4.300 9V5.200Z" fill="#c9c9c9"/></svg>
<div class="dd" style="left:508px;top:195px;border-top-color:#b5b5b5"></div>
<div class="fb" style="left:540px;width:54px"></div>
<svg class="abs" style="left:544px;top:192px" width="11" height="11" viewBox="0 0 11 11"><path d="M0.300 0.500H10.700L6.700 5.200V10.500L4.300 9V5.200Z" fill="#c9c9c9"/></svg>
<div class="dd" style="left:582px;top:195px;border-top-color:#b5b5b5"></div>
<div class="fb" style="left:612px;width:35px"></div>
<svg class="abs" style="left:616px;top:192px" width="11" height="11" viewBox="0 0 11 11"><path d="M0.300 0.500H10.700L6.700 5.200V10.500L4.300 9V5.200Z" fill="#c9c9c9"/></svg>
<div class="dd" style="left:635px;top:195px;border-top-color:#b5b5b5"></div>
<div class="fb" style="left:793px;width:112px"></div>
<svg class="abs" style="left:797px;top:192px" width="11" height="11" viewBox="0 0 11 11"><path d="M0.300 0.500H10.700L6.700 5.200V10.500L4.300 9V5.200Z" fill="#c9c9c9"/></svg>
<div class="dd" style="left:893px;top:195px;border-top-color:#b5b5b5"></div>
<div class="fb" style="left:926px;width:118px"></div>
<svg class="abs" style="left:930px;top:192px" width="11" height="11" viewBox="0 0 11 11"><path d="M0.300 0.500H10.700L6.700 5.200V10.500L4.300 9V5.200Z" fill="#c9c9c9"/></svg>
<div class="dd" style="left:1032px;top:195px;border-top-color:#b5b5b5"></div>
<div class="fb" style="left:1065px;width:104px"></div>
<svg class="abs" style="left:1069px;top:192px" width="11" height="11" viewBox="0 0 11 11"><path d="M0.300 0.500H10.700L6.700 5.200V10.500L4.300 9V5.200Z" fill="#c9c9c9"/></svg>
<div class="dd" style="left:1157px;top:195px;border-top-color:#b5b5b5"></div>
<div id="gbody">
<div class="row" style="top:0px"><span class="c1">251254</span><span class="c2">Elektrické<br>spotrebiče</span><span class="c3">Ventilátor</span></div>
<div class="row" style="top:39px"><span class="c1">251253</span><span class="c2">Elektrické<br>spotrebiče</span><span class="c3">Ventilátor</span></div>
<div class="row" style="top:78px"><span class="c1">251252</span><span class="c2">Elektrické<br>spotrebiče</span><span class="c3">Ventilátor</span></div>
<div class="row" style="top:117px"><span class="c1">251251</span><span class="c2">Elektrické<br>spotrebiče</span><span class="c3">Ventilátor</span></div>
<div class="row" style="top:156px"><span class="c1">251250</span><span class="c2">Elektrické<br>spotrebiče</span><span class="c3">Ventilátor</span></div>
<div class="row sel" style="top:195px"><span class="c1">251249</span><span class="c2">Elektrické<br>spotrebiče</span><span class="c3">Ventilátor</span></div>
<div class="row" style="top:234px"><span class="c1">251248</span><span class="c2">Elektrické<br>spotrebiče</span><span class="c3">Ventilátor</span></div>
<div class="row" style="top:273px"><span class="c1">251247</span><span class="c2">Elektrické<br>spotrebiče</span><span class="c3">Ventilátor</span></div>
<div class="row del" style="top:312px"><span class="c1">251246</span><span class="c2">Elektrické<br>spotrebiče</span><span class="c3">Ventilátor</span></div>
<div class="row" style="top:351px"><span class="c1">251245</span><span class="c2">Elektrické<br>spotrebiče</span><span class="c3">Ventilátor</span></div>
<div class="row" style="top:390px"><span class="c1">251244</span><span class="c2">Elektrické<br>spotrebiče</span><span class="c3">Ventilátor</span></div>
<div class="row" style="top:429px"><span class="c1">251243</span><span class="c2">Elektrické<br>spotrebiče</span><span class="c3">Ventilátor</span></div>
<div class="row" style="top:468px"><span class="c1">251242</span><span class="c2">Elektrické<br>spotrebiče</span><span class="c3">Ventilátor</span></div>
<div class="row" style="top:507px"><span class="c1">251241</span><span class="c2">Elektrické<br>spotrebiče</span><span class="c3">Ventilátor</span></div>
<div class="row" style="top:546px"><span class="c1">251240</span><span class="c2">Elektrické<br>spotrebiče</span><span class="c3">Ventilátor</span></div>
<div class="row" style="top:585px"><span class="c1">251230</span><span class="c2">Elektrické<br>spotrebiče</span><span class="c3">Prístroj</span></div>
<div class="gv" style="left:60px"></div>
<div class="gv" style="left:149px"></div>
<div class="gv" style="left:244px"></div>
<div class="gv" style="left:290px"></div>
<div class="gv" style="left:362px"></div>
<div class="gv" style="left:415px"></div>
<div class="gv" style="left:466px"></div>
<div class="gv" style="left:543px"></div>
<div class="gv" style="left:676px"></div>
<div class="gv" style="left:815px"></div>
</div>
<div class="red" style="left:232px;top:403px;width:171px;height:52px;z-index:3"></div>
<div class="abs" style="left:1166px;top:214px;width:13px;height:634px;background:#f1f1f1"></div>
<div class="abs" style="left:1168px;top:219px;width:0;height:0;border-left:4.500px solid transparent;border-right:4.500px solid transparent;border-bottom:7px solid #8e8e8e"></div>
<div class="abs" style="left:1168px;top:232px;width:9px;height:311px;background:#8e8e8e;border-radius:4.500px"></div>
<div class="abs" style="left:1168px;top:823px;width:0;height:0;border-left:4.500px solid transparent;border-right:4.500px solid transparent;border-top:7px solid #8e8e8e"></div>
<div class="abs" style="left:241px;top:834px;width:938px;height:14px;background:#f1f1f1"></div>
<div class="abs" style="left:245px;top:837px;width:0;height:0;border-top:4.500px solid transparent;border-bottom:4.500px solid transparent;border-right:7.500px solid #8e8e8e"></div>
<div class="abs" style="left:259px;top:837px;width:873px;height:9px;background:#8e8e8e;border-radius:4.500px"></div>
<div class="abs" style="left:1153.500px;top:837px;width:0;height:0;border-top:4.500px solid transparent;border-bottom:4.500px solid transparent;border-left:7px solid #8e8e8e"></div>
<div class="abs" style="left:1px;top:847px;width:1178px;height:1px;background:#fafafa"></div>
<!--/MAIN-->
</div>

<!-- MODAL -->
<div id="modal">
<!--MODAL-->
<div id="mhead"></div>
<svg class="abs" style="left:11px;top:21px" width="58" height="58" viewBox="0 0 58 58"><g fill="#ebebeb" stroke="#e2e2e2" stroke-width="1"><rect x="11.500" y="0.500" width="35.500" height="23"/><rect x="24.500" y="23.500" width="9.500" height="3.500"/><rect x="19.500" y="26.500" width="19" height="2.300"/><rect x="0.800" y="28.800" width="56.400" height="6"/><rect x="5" y="34.800" width="6" height="22.500"/><rect x="47" y="34.800" width="6" height="22.500"/><rect x="11" y="45.500" width="36" height="3"/></g></svg>
<div class="abs" style="left:313px;top:10px;font-size:15.700px;line-height:18px;font-weight:bold;color:#111;white-space:nowrap">Inventár</div>
<svg class="abs" style="left:698px;top:11px" width="13" height="13" viewBox="0 0 13 13"><path d="M1.800 1.800l9 9M10.800 1.800l-9 9" stroke="#3e3e3e" stroke-width="3.300"/></svg>
<div class="abs" style="left:143.6px;top:38px;font-size:11px;line-height:13px;color:#8a8a8a">Názov:</div>
<div class="abs" style="left:144.5px;top:54px;font-size:18px;line-height:21px;font-weight:bold;color:#111;white-space:nowrap">Ventilátor 10</div>
<div class="dot" style="left:140px;top:77.5px;width:551px;border-top-color:#9a9a9a"></div>
<div class="ml" style="left:-42px;top:108px;width:200px">Inventár:</div>
<div class="mi" style="left:166px;top:101px;width:169px">Elektrické spotrebiče</div>
<div class="dd" style="left:322.5px;top:114px;border-top-color:#b0b0b0"></div>
<div class="ml" style="left:312px;top:108px;width:200px">Učebňa:</div>
<div class="mi" style="left:520px;top:101px;width:169px">-</div>
<div class="dd" style="left:676.5px;top:114px;border-top-color:#b0b0b0"></div>
<div class="ml" style="left:-42px;top:146px;width:200px">Číslo:</div>
<div class="mi" style="left:166px;top:139px;width:169px">251249</div>
<div class="dot" style="left:11px;top:188px;width:7px"></div>
<div class="sec" style="left:24.8px;top:181px">Cena a počet</div>
<div class="dot" style="left:107px;top:188px;width:601px"></div>
<div class="ml" style="left:-42px;top:214px;width:200px">Cena:</div>
<div class="mi" style="left:166px;top:207px;width:169px;text-align:right;padding-right:4px;padding-left:0">12,80</div>
<div class="ml" style="left:312px;top:214px;width:200px">Počet:</div>
<div class="mi" style="left:520px;top:207px;width:169px">1</div>
<div class="dot" style="left:11px;top:256px;width:7px"></div>
<div class="sec" style="left:24.8px;top:249px">Nadobudnutie</div>
<div class="dot" style="left:113px;top:256px;width:240px"></div>
<div class="dot" style="left:365px;top:256px;width:7px"></div>
<div class="sec" style="left:378px;top:249px">Vyradenie</div>
<div class="dot" style="left:443px;top:256px;width:265px"></div>
<div class="ml" style="left:-42px;top:282px;width:200px">Výrobné číslo:</div>
<div class="mi" style="left:166px;top:275px;width:169px">VE 00124545</div>
<div class="ml" style="left:-42px;top:320px;width:200px">Dátum nadobudnutia:</div>
<div class="mi" style="left:166px;top:313px;width:169px">01. 12. 2025</div>
<div class="ml" style="left:-42px;top:358px;width:200px">Spôsob nadobudnutia:</div>
<div class="mi" style="left:166px;top:351px;width:169px">kúpa</div>
<div class="ml" style="left:-42px;top:396px;width:200px">Číslo faktúry:</div>
<div class="mi" style="left:166px;top:389px;width:169px">2512V 0020</div>
<div class="ml" style="left:-42px;top:434px;width:200px">Účet:</div>
<div class="mi" style="left:166px;top:427px;width:169px">13</div>
<div class="ml" style="left:312px;top:282px;width:200px">Dátum vyradenia:</div>
<div class="mi" style="left:520px;top:275px;width:169px"></div>
<div class="ml" style="left:312px;top:320px;width:200px">Dôvod vyradenia:</div>
<div class="mi" style="left:520px;top:313px;width:169px"></div>
<div class="ml" style="left:312px;top:358px;width:200px">Spôsob likvidácie:</div>
<div class="mi" style="left:520px;top:351px;width:169px"></div>
<div class="dot" style="left:11px;top:476px;width:7px"></div>
<div class="sec" style="left:24.8px;top:469px">Ďalšie údaje</div>
<div class="dot" style="left:103px;top:476px;width:605px"></div>
<div class="ml" style="left:-42px;top:502px;width:200px">Zodpovedná osoba:</div>
<div class="mi" style="left:166px;top:495px;width:523px">-</div>
<div class="dd" style="left:676.5px;top:508px;border-top-color:#b0b0b0"></div>
<div class="ml" style="left:-42px;top:540px;width:200px">Poznámka:</div>
<div class="mi" style="left:166px;top:533px;width:523px"></div>
<div class="abs" style="left:0;top:576px;width:720px;height:1px;background:#cfcfcf"></div>
<div class="btn" style="left:13px;top:587px;width:29px;height:30px;font-size:18px;padding-top:7px">&lt;</div>
<div class="btn" style="left:48px;top:587px;width:29px;height:30px;font-size:18px;padding-top:7px">&gt;</div>
<div class="abs" style="left:89.5px;top:595px;font-size:12px;line-height:14px;color:#d2d2d2;white-space:nowrap">B8C59D8D7B33FE74</div>
<div class="btn" style="left:610px;top:587px;width:37px;height:30px;background:#4faa54;border-color:#49a34e;color:#fff;font-size:12px;padding-top:8px">Ok</div>
<div class="btn" style="left:653px;top:587px;width:54px;height:30px;font-size:12px;padding-top:8px">Zrušiť</div>
<!--/MODAL-->
</div>

</div>
</body>
</html>
